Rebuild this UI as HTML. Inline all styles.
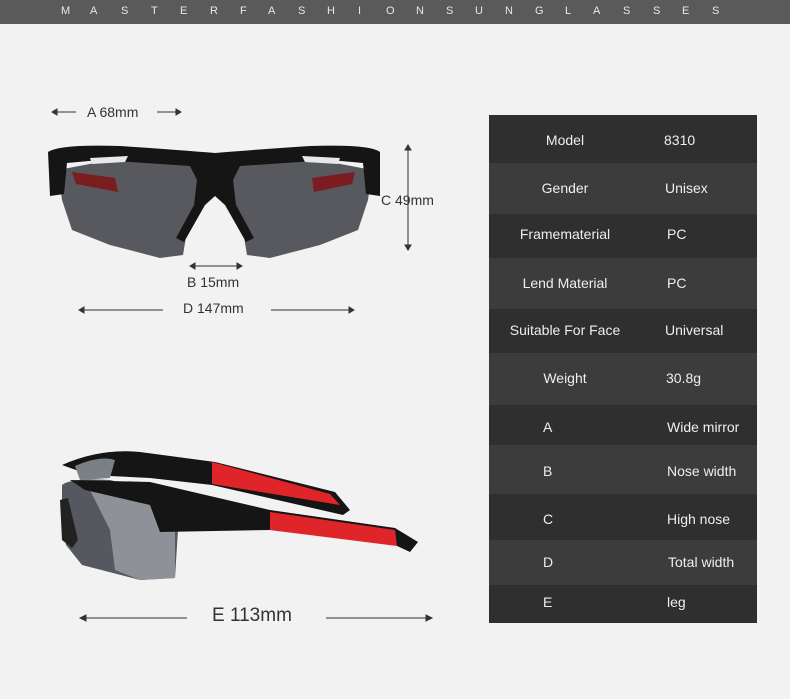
<!DOCTYPE html>
<html><head><meta charset="utf-8"><style>
body{margin:0;width:790px;height:699px;background:#f2f2f2;font-family:"Liberation Sans","Noto Sans CJK SC",sans-serif;position:relative;overflow:hidden}
.top{position:absolute;left:0;top:0;width:790px;height:24px;background:#5a5a5a}
.top span{position:absolute;top:5px;color:#e8e8e8;font-size:11px}
.t{position:absolute;color:#333;font-size:14px;white-space:nowrap}
.r{position:absolute;left:489px;width:268px}
.c{position:absolute;color:#eee;font-size:14px;white-space:nowrap;line-height:16px}
.l{left:489px;width:152px;text-align:center}
</style></head><body>
<div class="top">
<span style="left:61px">M</span><span style="left:90px">A</span><span style="left:121px">S</span><span style="left:151px">T</span><span style="left:180px">E</span><span style="left:210px">R</span><span style="left:240px">F</span><span style="left:268px">A</span><span style="left:298px">S</span><span style="left:327px">H</span><span style="left:358px">I</span><span style="left:386px">O</span><span style="left:416px">N</span><span style="left:446px">S</span><span style="left:475px">U</span><span style="left:505px">N</span><span style="left:535px">G</span><span style="left:565px">L</span><span style="left:593px">A</span><span style="left:623px">S</span><span style="left:653px">S</span><span style="left:682px">E</span><span style="left:712px">S</span>
</div>
<svg width="790" height="699" style="position:absolute;left:0;top:0">
<g stroke="#333" stroke-width="1" fill="#333">
<line x1="52" y1="112" x2="76" y2="112"/><path d="M52 112 l5 -3 v6z"/>
<line x1="157" y1="112" x2="181" y2="112"/><path d="M181 112 l-5 -3 v6z"/>
<line x1="408" y1="145" x2="408" y2="250"/><path d="M408 145 l-3 5 h6z M408 250 l-3 -5 h6z"/>
<line x1="190" y1="266" x2="242" y2="266"/><path d="M190 266 l5 -3 v6z M242 266 l-5 -3 v6z"/>
<line x1="79" y1="310" x2="163" y2="310"/><path d="M79 310 l5 -3 v6z"/>
<line x1="271" y1="310" x2="354" y2="310"/><path d="M354 310 l-5 -3 v6z"/>
<line x1="80" y1="618" x2="187" y2="618"/><path d="M80 618 l6 -3 v6z"/>
<line x1="326" y1="618" x2="432" y2="618"/><path d="M432 618 l-6 -3 v6z"/>
</g>
<!-- front glasses -->
<path d="M58 170 L62 200 L72 230 L110 245 L160 258 L183 255 L188 225 L205 193 L225 193 L242 225 L247 255 L270 258 L320 245 L358 230 L368 200 L372 170 L330 162 L240 160 L190 160 L100 162Z" fill="#57595e"/>
<path d="M48 152 Q60 144 120 146 Q180 150 215 153 Q250 150 310 146 Q370 144 380 152 L380 196 L366 194 L363 163 L330 160 L240 166 L233 180 L236 205 L254 238 L246 242 L225 205 L215 196 L205 205 L184 242 L176 238 L194 205 L197 180 L190 166 L100 160 L67 163 L64 194 L50 196Z" fill="#151515"/>
<path d="M90 158 L128 156 L125 162 L92 164Z M302 156 L340 158 L338 164 L305 162Z" fill="#e8e8e8"/>
<path d="M72 172 L115 178 L118 192 L76 184Z M312 178 L355 172 L352 184 L314 192Z" fill="#7a1c20"/>
<!-- side glasses -->
<path d="M62 465 Q100 448 140 452 L215 462 L335 492 L350 510 L343 515 L212 485 L150 478 L90 475Z" fill="#151515"/>
<path d="M212 462 L330 494 L340 505 L212 484Z" fill="#e0252a"/>
<path d="M75 466 Q100 455 115 460 L110 478 L80 480Z" fill="#7b7f86"/>
<path d="M62 485 Q70 478 110 480 L150 490 L160 520 L178 530 L175 578 L140 580 L82 565 L66 545 L62 520Z" fill="#55585e"/>
<path d="M90 490 L150 492 L160 515 L175 525 L175 578 L140 580 L115 570 L110 530 Z" fill="#8e9197"/>
<path d="M70 480 L150 482 L270 510 L395 528 L418 542 L410 552 L395 545 L270 530 L160 532 L150 505 L85 490Z" fill="#151515"/>
<path d="M270 512 L395 530 L397 546 L270 530Z" fill="#e0252a"/>
<path d="M60 500 L68 498 L78 540 L72 548 L62 540Z" fill="#222"/>
</svg>
<div class="t" style="left:87px;top:104px">A 68mm</div>
<div class="t" style="left:381px;top:192px">C 49mm</div>
<div class="t" style="left:187px;top:274px">B 15mm</div>
<div class="t" style="left:183px;top:300px">D 147mm</div>
<div class="t" style="left:212px;top:605px;font-size:19px">E 113mm</div>
<div class="r" style="top:115px;height:48px;background:#2f2f2f"></div>
<div class="r" style="top:163px;height:51px;background:#3c3c3c"></div>
<div class="r" style="top:214px;height:44px;background:#2f2f2f"></div>
<div class="r" style="top:258px;height:51px;background:#3c3c3c"></div>
<div class="r" style="top:309px;height:44px;background:#2f2f2f"></div>
<div class="r" style="top:353px;height:52px;background:#3c3c3c"></div>
<div class="r" style="top:405px;height:40px;background:#2f2f2f"></div>
<div class="r" style="top:445px;height:49px;background:#3c3c3c"></div>
<div class="r" style="top:494px;height:46px;background:#2f2f2f"></div>
<div class="r" style="top:540px;height:45px;background:#3c3c3c"></div>
<div class="r" style="top:585px;height:38px;background:#2f2f2f"></div>
<div class="c l" style="top:132px">Model</div><div class="c" style="left:664px;top:132px">8310</div>
<div class="c l" style="top:180px">Gender</div><div class="c" style="left:665px;top:180px">Unisex</div>
<div class="c l" style="top:226px">Framematerial</div><div class="c" style="left:667px;top:226px">PC</div>
<div class="c l" style="top:275px">Lend Material</div><div class="c" style="left:667px;top:275px">PC</div>
<div class="c l" style="top:322px">Suitable For Face</div><div class="c" style="left:665px;top:322px">Universal</div>
<div class="c l" style="top:370px">Weight</div><div class="c" style="left:666px;top:370px">30.8g</div>
<div class="c" style="left:543px;top:419px">A</div><div class="c" style="left:667px;top:419px">Wide mirror</div>
<div class="c" style="left:543px;top:463px">B</div><div class="c" style="left:667px;top:463px">Nose width</div>
<div class="c" style="left:543px;top:511px">C</div><div class="c" style="left:667px;top:511px">High nose</div>
<div class="c" style="left:543px;top:554px">D</div><div class="c" style="left:668px;top:554px">Total width</div>
<div class="c" style="left:543px;top:594px">E</div><div class="c" style="left:667px;top:594px">leg</div>
</body></html>
